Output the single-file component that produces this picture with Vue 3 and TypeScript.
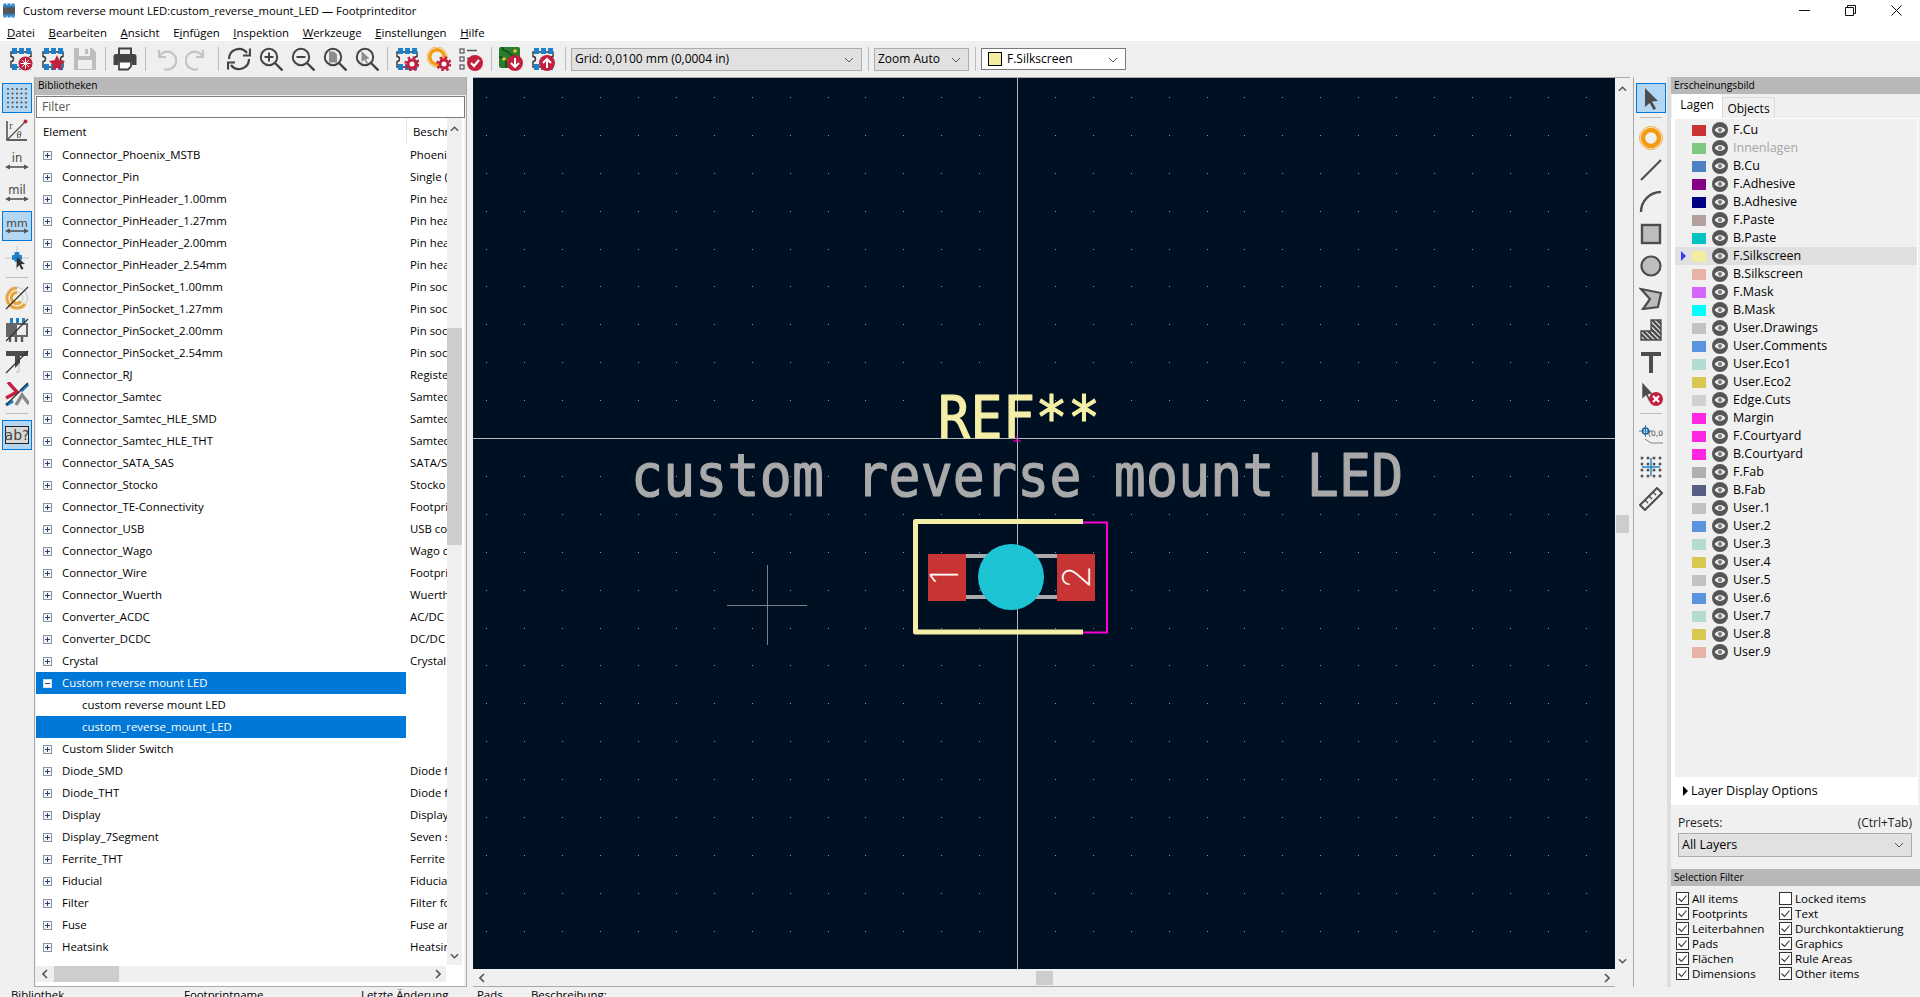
<script setup lang="ts">
type IconLabel = { t: string; x: number; y: number; s: number; f?: string; italic?: boolean };
type ToolItem = { icon?: string; sep?: boolean; wide?: boolean; active?: boolean; labels?: IconLabel[] };

const menus = [
  { pre: '', key: 'D', post: 'atei' },
  { pre: '', key: 'B', post: 'earbeiten' },
  { pre: '', key: 'A', post: 'nsicht' },
  { pre: 'E', key: 'i', post: 'nfügen' },
  { pre: '', key: 'I', post: 'nspektion' },
  { pre: '', key: 'W', post: 'erkzeuge' },
  { pre: '', key: 'E', post: 'instellungen' },
  { pre: '', key: 'H', post: 'ilfe' },
];

const topTools: ToolItem[] = [
  { icon: 'i-fp-new' }, { icon: 'i-fp-star' }, { icon: 'i-save' }, { sep: true },
  { icon: 'i-print' }, { sep: true },
  { icon: 'i-undo' }, { icon: 'i-redo' }, { sep: true, wide: true },
  { icon: 'i-refresh' }, { icon: 'i-zoom-in' }, { icon: 'i-zoom-out' }, { icon: 'i-zoom-fit' }, { icon: 'i-zoom-sel' }, { sep: true },
  { icon: 'i-fp-gear' }, { icon: 'i-pad-gear' }, { icon: 'i-drc' }, { sep: true },
  { icon: 'i-pcb-down' }, { icon: 'i-fp-up' },
];

const leftTools: ToolItem[] = [
  { icon: 'i-dots', active: true },
  { icon: 'i-polar', labels: [{ t: 'r', x: 6, y: 11, s: 10, f: 'Liberation Serif' }, { t: 'θ', x: 14, y: 20, s: 10, f: 'Liberation Serif', italic: true }] },
  { icon: 'i-dim', labels: [{ t: 'in', x: 12, y: 12, s: 11.5 }] },
  { icon: 'i-dim', labels: [{ t: 'mil', x: 12, y: 12, s: 11.5 }] },
  { icon: 'i-dim', active: true, labels: [{ t: 'mm', x: 12, y: 12.5, s: 11 }] },
  { icon: 'i-cross-cursor' }, { sep: true },
  { icon: 'i-donut-off' }, { icon: 'i-chip-off' }, { icon: 'i-t-off' }, { icon: 'i-track-off' }, { sep: true, wide: true },
  { icon: 'i-abq', active: true, labels: [{ t: 'ab?', x: 12, y: 17, s: 14 }] },
];

const rightTools: ToolItem[] = [
  { icon: 'i-arrow', active: true }, { sep: true },
  { icon: 'i-donut' }, { icon: 'i-line' }, { icon: 'i-arc' }, { icon: 'i-rect' }, { icon: 'i-circle' }, { icon: 'i-poly' }, { icon: 'i-hatch' }, { icon: 'i-t' }, { icon: 'i-del' }, { sep: true, wide: true },
  { icon: 'i-origin', labels: [{ t: '(0,0)', x: 18, y: 13, s: 7.5 }] }, { icon: 'i-gridorigin' }, { icon: 'i-ruler' },
];

const libs: { name: string; desc?: string; kind?: string }[] = [
  { name: 'Connector_Phoenix_MSTB', desc: 'Phoenix Contact' },
  { name: 'Connector_Pin', desc: 'Single (1x)' },
  { name: 'Connector_PinHeader_1.00mm', desc: 'Pin header' },
  { name: 'Connector_PinHeader_1.27mm', desc: 'Pin header' },
  { name: 'Connector_PinHeader_2.00mm', desc: 'Pin header' },
  { name: 'Connector_PinHeader_2.54mm', desc: 'Pin header' },
  { name: 'Connector_PinSocket_1.00mm', desc: 'Pin socket' },
  { name: 'Connector_PinSocket_1.27mm', desc: 'Pin socket' },
  { name: 'Connector_PinSocket_2.00mm', desc: 'Pin socket' },
  { name: 'Connector_PinSocket_2.54mm', desc: 'Pin socket' },
  { name: 'Connector_RJ', desc: 'Registered' },
  { name: 'Connector_Samtec', desc: 'Samtec' },
  { name: 'Connector_Samtec_HLE_SMD', desc: 'Samtec' },
  { name: 'Connector_Samtec_HLE_THT', desc: 'Samtec' },
  { name: 'Connector_SATA_SAS', desc: 'SATA/SAS' },
  { name: 'Connector_Stocko', desc: 'Stocko' },
  { name: 'Connector_TE-Connectivity', desc: 'Footprint' },
  { name: 'Connector_USB', desc: 'USB conn' },
  { name: 'Connector_Wago', desc: 'Wago con' },
  { name: 'Connector_Wire', desc: 'Footprint' },
  { name: 'Connector_Wuerth', desc: 'Wuerth' },
  { name: 'Converter_ACDC', desc: 'AC/DC' },
  { name: 'Converter_DCDC', desc: 'DC/DC' },
  { name: 'Crystal', desc: 'Crystal' },
  { name: 'Custom reverse mount LED', kind: 'open' },
  { name: 'custom reverse mount LED', kind: 'child' },
  { name: 'custom_reverse_mount_LED', kind: 'child-sel' },
  { name: 'Custom Slider Switch' },
  { name: 'Diode_SMD', desc: 'Diode foot' },
  { name: 'Diode_THT', desc: 'Diode foot' },
  { name: 'Display', desc: 'Display' },
  { name: 'Display_7Segment', desc: 'Seven seg' },
  { name: 'Ferrite_THT', desc: 'Ferrite' },
  { name: 'Fiducial', desc: 'Fiducial' },
  { name: 'Filter', desc: 'Filter foot' },
  { name: 'Fuse', desc: 'Fuse and' },
  { name: 'Heatsink', desc: 'Heatsink' },
  { name: 'Inductor_SMD', desc: 'Inductor' },
];

const layers = [
  ['F.Cu', '#c83434'], ['Innenlagen', '#7fc87f'], ['B.Cu', '#4d7fc4'], ['F.Adhesive', '#840084'],
  ['B.Adhesive', '#000084'], ['F.Paste', '#b1a09c'], ['B.Paste', '#00c2c2'], ['F.Silkscreen', '#f2eda1'],
  ['B.Silkscreen', '#e8b2a7'], ['F.Mask', '#d864ff'], ['B.Mask', '#00ffff'], ['User.Drawings', '#c2c2c2'],
  ['User.Comments', '#5994dc'], ['User.Eco1', '#b4dbd2'], ['User.Eco2', '#d8c852'], ['Edge.Cuts', '#d0d2cd'],
  ['Margin', '#ff26e2'], ['F.Courtyard', '#ff26e2'], ['B.Courtyard', '#ff26e2'], ['F.Fab', '#afafaf'],
  ['B.Fab', '#585d84'], ['User.1', '#c2c2c2'], ['User.2', '#5994dc'], ['User.3', '#b4dbd2'],
  ['User.4', '#d8c852'], ['User.5', '#c2c2c2'], ['User.6', '#5994dc'], ['User.7', '#b4dbd2'],
  ['User.8', '#d8c852'], ['User.9', '#e8b2a7'],
];

const filters = [
  ['All items', true], ['Locked items', false],
  ['Footprints', true], ['Text', true],
  ['Leiterbahnen', true], ['Durchkontaktierung', true],
  ['Pads', true], ['Graphics', true],
  ['Flächen', true], ['Rule Areas', true],
  ['Dimensions', true], ['Other items', true],
] as [string, boolean][];

// grid dots are placed relative to the canvas origin
const gridDots: { x: number; y: number }[] = [];
for (let i = -14; i <= 16; i++) {
  for (let j = -9; j <= 14; j++) {
    gridDots.push({ x: Math.round(1017 + i * 37.9), y: Math.round(438 + j * 37.9) });
  }
}

const hatchLines: string[] = [];
for (let k = -24; k <= 24; k += 5) hatchLines.push(`M${k} 0L${k + 24} 24`);
const hatchPath = hatchLines.join('');
</script>

<template>
  <div class="app">
    <svg class="defs" aria-hidden="true">
      <symbol id="fp" viewBox="0 0 24 24">
        <path d="M2 5h20v4.500a2.500 2.500 0 0 0 0 5V20H2v-5.500a2.500 2.500 0 0 0 0-5z" fill="none" stroke="#333" stroke-width="1.400" />
        <g fill="#1e81ca"><rect x="3" y="1" width="5" height="6" /><rect x="10" y="1" width="5" height="6" /><rect x="17" y="1" width="5" height="6" /><rect x="3" y="17" width="5" height="6" /><rect x="10" y="17" width="5" height="6" /><rect x="17" y="17" width="5" height="6" /></g>
      </symbol>
      <symbol id="gear" viewBox="0 0 24 24">
        <circle cx="17" cy="17" r="5.500" fill="#c2203f" />
        <circle cx="17" cy="17" r="6.500" fill="none" stroke="#c2203f" stroke-width="2.500" stroke-dasharray="2.500 2.600" />
        <circle cx="17" cy="17" r="2.500" fill="#fff" />
      </symbol>
      <symbol id="i-fp-new" viewBox="0 0 24 24">
        <use href="#fp" width="24" height="24" />
        <circle cx="16.500" cy="16.500" r="7.500" fill="#c2203f" stroke="#fff" stroke-width="0.800" />
        <path d="M16.500 11.500v10M11.500 16.500h10M13.200 13.200l6.600 6.600M19.800 13.200l-6.600 6.600" stroke="#fff" stroke-width="1" />
      </symbol>
      <symbol id="i-fp-star" viewBox="0 0 24 24">
        <use href="#fp" width="24" height="24" />
        <path d="M16 8l2.500 5.300 5.500.7-4 3.900 1 5.600-5-2.700-5 2.700 1-5.600-4-3.900 5.500-.7z" fill="#c2203f" />
      </symbol>
      <symbol id="i-save" viewBox="0 0 24 24">
        <path d="M1 1h18l4 4v18H1z" fill="#bdbdbd" />
        <rect x="6" y="1" width="11" height="8" fill="#efefef" /><rect x="12" y="2" width="3" height="5" fill="#bdbdbd" />
        <rect x="5" y="13" width="14" height="9" fill="#efefef" />
      </symbol>
      <symbol id="i-print" viewBox="0 0 24 24">
        <path d="M6 7V1.500h12V7" fill="none" stroke="#444" stroke-width="2" />
        <path d="M3 7h18a2.500 2.500 0 0 1 2.500 2.500V18H19v-4H5v4H.5V9.500A2.500 2.500 0 0 1 3 7z" fill="#444" />
        <path d="M6 14.500h12v5l-3 3H6z" fill="#fff" stroke="#444" stroke-width="1.800" />
      </symbol>
      <symbol id="i-undo" viewBox="0 0 24 24">
        <path d="M6 3v7h7M6 10a9 9 0 1 1 5 12" fill="none" stroke="#c4c4c4" stroke-width="2.200" />
      </symbol>
      <symbol id="i-redo" viewBox="0 0 24 24">
        <path d="M18 3v7h-7M18 10a9 9 0 1 0-5 12" fill="none" stroke="#c4c4c4" stroke-width="2.200" />
      </symbol>
      <symbol id="i-refresh" viewBox="0 0 24 24">
        <path d="M2 12a10 10 0 0 1 18-6M22 12a10 10 0 0 1-18 6" fill="none" stroke="#444" stroke-width="2.200" />
        <path d="M23 1.500v7h-7M1 22.500v-7h7" fill="none" stroke="#444" stroke-width="2.200" />
      </symbol>
      <symbol id="lens" viewBox="0 0 24 24">
        <circle cx="10" cy="10" r="8.200" fill="none" stroke="#444" stroke-width="2" />
        <path d="M16 16l7.500 7.500" stroke="#444" stroke-width="2.400" />
      </symbol>
      <symbol id="i-zoom-in" viewBox="0 0 24 24">
        <use href="#lens" width="24" height="24" /><path d="M10 5.500v9M5.500 10h9" stroke="#444" stroke-width="2" />
      </symbol>
      <symbol id="i-zoom-out" viewBox="0 0 24 24">
        <use href="#lens" width="24" height="24" /><path d="M5.500 10h9" stroke="#444" stroke-width="2" />
      </symbol>
      <symbol id="i-zoom-fit" viewBox="0 0 24 24">
        <use href="#lens" width="24" height="24" /><path d="M6 4.500h5l3 3v8H6z" fill="#8c8c8c" />
      </symbol>
      <symbol id="i-zoom-sel" viewBox="0 0 24 24">
        <use href="#lens" width="24" height="24" /><path d="M6.500 4l8 7.500-3.500.5 2 4-1.500.7-2-4-3 2.300z" fill="#8c8c8c" />
      </symbol>
      <symbol id="i-fp-gear" viewBox="0 0 24 24">
        <use href="#fp" width="24" height="24" /><use href="#gear" width="24" height="24" />
      </symbol>
      <symbol id="i-pad-gear" viewBox="0 0 24 24">
        <circle cx="10" cy="10" r="7.200" fill="none" stroke="#f39c12" stroke-width="3.400" />
        <circle cx="10" cy="10" r="10" fill="none" stroke="#f39c12" stroke-width="0.700" />
        <use href="#gear" width="24" height="24" />
      </symbol>
      <symbol id="i-drc" viewBox="0 0 24 24">
        <g fill="none" stroke="#555" stroke-width="1.200"><rect x="1" y="2" width="4" height="4" /><rect x="1" y="10" width="4" height="4" /><rect x="1" y="18" width="4" height="4" /></g>
        <path d="M8 3.500h10M8 11.500h5" stroke="#555" stroke-width="1.400" />
        <circle cx="16" cy="16" r="8" fill="#c2203f" />
        <path d="M12 16l3 3 5-6" fill="none" stroke="#fff" stroke-width="2.200" />
      </symbol>
      <symbol id="i-pcb-down" viewBox="0 0 24 24">
        <rect x="0" y="0" width="21" height="21" rx="2" fill="#2a7d2e" />
        <path d="M3 0c0 5 5 3 7 6s6 3 9 3M0 10c4 0 5 2 7 5l0 6" fill="none" stroke="#0f4d17" stroke-width="1.600" />
        <circle cx="5" cy="12" r="1.800" fill="#f2c230" /><circle cx="16" cy="4" r="1.800" fill="#f2c230" />
        <circle cx="16" cy="16" r="8" fill="#c2203f" />
        <path d="M16 11v9M12 16l4 4 4-4" fill="none" stroke="#fff" stroke-width="2" />
      </symbol>
      <symbol id="i-fp-up" viewBox="0 0 24 24">
        <use href="#fp" width="24" height="24" />
        <circle cx="16" cy="16" r="8" fill="#c2203f" />
        <path d="M16 21v-9M12 16l4-4 4 4" fill="none" stroke="#fff" stroke-width="2" />
      </symbol>
      <symbol id="i-dots" viewBox="0 0 24 24">
        <g fill="#555"><circle v-for="d in 25" :key="d" :cx="3 + ((d - 1) % 5) * 4.500" :cy="3 + Math.floor((d - 1) / 5) * 4.500" r="1.100" /></g>
      </symbol>
      <symbol id="i-polar" viewBox="0 0 24 24">
        <path d="M2 3v19h20" fill="none" stroke="#333" stroke-width="1.300" />
        <path d="M2 22L20 4" stroke="#555" stroke-width="1.300" />
        <circle cx="20.500" cy="3.500" r="2" fill="#c2203f" />
      </symbol>
      <symbol id="i-dim" viewBox="0 0 24 24">
        <path d="M2 17h20" stroke="#555" stroke-width="1.600" />
        <path d="M0 17l5-2.500v5zM24 17l-5-2.500v5z" fill="#555" />
      </symbol>
      <symbol id="i-cross-cursor" viewBox="0 0 24 24">
        <path d="M12 0v24M0 12h24" stroke="#bbb" stroke-width="0.800" />
        <rect x="7" y="9" width="10" height="5" rx="1" fill="#1e81ca" /><rect x="9.500" y="6" width="5" height="10" rx="1" fill="#1e81ca" />
        <path d="M12 11l8 7-4 .3 2.500 4.500-2 1-2.300-4.500-2.700 2.700z" fill="#333" />
      </symbol>
      <symbol id="i-donut" viewBox="0 0 24 24">
        <circle cx="12" cy="12" r="8" fill="none" stroke="#f39c12" stroke-width="4.500" />
        <circle cx="12" cy="12" r="11.500" fill="none" stroke="#f39c12" stroke-width="0.800" />
      </symbol>
      <symbol id="i-donut-off" viewBox="0 0 24 24">
        <path d="M12 2a10 10 0 1 0 8 16" fill="none" stroke="#f39c12" stroke-width="3" />
        <path d="M12 6.500a5.500 5.500 0 1 0 4 9" fill="none" stroke="#f39c12" stroke-width="3" />
        <g fill="none" stroke="#bbb" stroke-width="0.800"><circle cx="12" cy="12" r="10.500" /><circle cx="12" cy="12" r="6" /></g>
        <path d="M1 23L23 1" stroke="#333" stroke-width="1.200" />
      </symbol>
      <symbol id="i-chip-off" viewBox="0 0 24 24">
        <g fill="#1e81ca"><rect x="5" y="0" width="3" height="5" /><rect x="11" y="0" width="3" height="5" /><rect x="17" y="0" width="3" height="5" /></g>
        <rect x="1" y="5" width="22" height="14" fill="#666" />
        <rect x="12" y="7" width="9" height="10" fill="#efefef" />
        <path d="M5 19v5M11 19v5M17 19v5" stroke="#555" stroke-width="2.400" />
        <path d="M1 23L23 1" stroke="#333" stroke-width="1.200" />
      </symbol>
      <symbol id="i-t" viewBox="0 0 24 24">
        <path d="M2 2h20v4h-8v17h-4V6H2z" fill="#4d4d4d" />
      </symbol>
      <symbol id="i-t-off" viewBox="0 0 24 24">
        <path d="M1 1h22v5h-8v7l-5 5V6H1z" fill="#4d4d4d" />
        <path d="M11 22h3V14" fill="none" stroke="#bbb" stroke-width="1" />
        <path d="M1 23L23 1" stroke="#333" stroke-width="1.200" />
      </symbol>
      <symbol id="i-track-off" viewBox="0 0 24 24">
        <path d="M3 0l9 10L1 16" fill="none" stroke="#c2203f" stroke-width="3.400" />
        <path d="M23 2l-7 7M8 19l-7 4" fill="none" stroke="#1e81ca" stroke-width="3.400" />
        <path d="M24 22l-7-9-6 10" fill="none" stroke="#888" stroke-width="3.400" />
        <path d="M1 23L23 1" stroke="#333" stroke-width="1.200" />
      </symbol>
      <symbol id="i-abq" viewBox="0 0 24 24">
        <rect x="0.500" y="3.500" width="23" height="17" fill="#d8d8d8" stroke="#222" />
      </symbol>
      <symbol id="i-arrow" viewBox="0 0 24 24">
        <path d="M6 2l13 13-6 .5 4 7-2.500 1.500-3.800-7L6 21z" fill="#4d4d4d" />
      </symbol>
      <symbol id="i-line" viewBox="0 0 24 24"><path d="M2 22L22 2" stroke="#4d4d4d" stroke-width="2.200" /></symbol>
      <symbol id="i-arc" viewBox="0 0 24 24"><path d="M2 22A20 20 0 0 1 22 2" fill="none" stroke="#4d4d4d" stroke-width="2.400" /></symbol>
      <symbol id="i-rect" viewBox="0 0 24 24"><rect x="3" y="3" width="18" height="18" fill="#bdbdbd" stroke="#4d4d4d" stroke-width="2.400" /></symbol>
      <symbol id="i-circle" viewBox="0 0 24 24"><circle cx="12" cy="12" r="9.500" fill="#bdbdbd" stroke="#4d4d4d" stroke-width="2.200" /></symbol>
      <symbol id="i-poly" viewBox="0 0 24 24"><path d="M2 3l20 4-3 14-15 2 7-10z" fill="#bdbdbd" stroke="#4d4d4d" stroke-width="2.200" /></symbol>
      <symbol id="i-hatch" viewBox="0 0 24 24">
        <clipPath id="hatch-clip"><path d="M12 2h10v20H2v-9h10z" /></clipPath>
        <g clip-path="url(#hatch-clip)"><rect width="24" height="24" fill="#eee" /><path :d="hatchPath" stroke="#4d4d4d" stroke-width="2.400" /></g>
        <path d="M12 2h10v20H2v-9h10z" fill="none" stroke="#4d4d4d" stroke-width="1.400" />
      </symbol>
      <symbol id="i-del" viewBox="0 0 24 24">
        <path d="M3 0l11 12-5 .5 3 6-2 1-3-6-4 3.500z" fill="#4d4d4d" stroke="#fff" stroke-width="0.500" />
        <circle cx="17" cy="17" r="7" fill="#c2203f" />
        <path d="M14 14l6 6M20 14l-6 6" stroke="#fff" stroke-width="2.200" />
      </symbol>
      <symbol id="i-origin" viewBox="0 0 24 24">
        <path d="M0 8h13M6.500 2v12" stroke="#1e81ca" stroke-width="1" />
        <circle cx="6.500" cy="8" r="3" fill="none" stroke="#1e5f9a" stroke-width="1.600" />
        <path d="M6 16l6 4h12" fill="none" stroke="#666" stroke-width="0.800" />
      </symbol>
      <symbol id="i-gridorigin" viewBox="0 0 24 24">
        <path d="M12 3v18M3 12h18" stroke="#1e81ca" stroke-width="1.400" />
        <g fill="#555"><circle v-for="d in 16" :key="d" :cx="3 + ((d - 1) % 4) * 6" :cy="3 + Math.floor((d - 1) / 4) * 6" r="1.500" /></g>
      </symbol>
      <symbol id="i-ruler" viewBox="0 0 24 24">
        <path d="M1 18L18 1l5 5L6 23z" fill="#efefef" stroke="#4d4d4d" stroke-width="2" />
        <path d="M6 13l3 3M10 9l3 3M14 5l3 3" stroke="#4d4d4d" stroke-width="1.400" />
      </symbol>
      <symbol id="eye" viewBox="0 0 16 16">
        <circle cx="8" cy="8" r="8" fill="#555" />
        <path d="M2.500 8c3-4 8-4 11 0-3 4-8 4-11 0z" fill="#ededed" />
        <circle cx="8" cy="8" r="2" fill="#777" />
      </symbol>
      <symbol id="exp-plus" viewBox="0 0 9 9">
        <rect x="0.500" y="0.500" width="8" height="8" fill="#f4f4f4" stroke="#8a93a6" />
        <path d="M2 4.500h5M4.500 2v5" stroke="#2b3d73" />
      </symbol>
      <symbol id="exp-minus" viewBox="0 0 9 9">
        <rect x="0.500" y="0.500" width="8" height="8" fill="#fff" stroke="#cfe0f0" />
        <path d="M2 4.500h5" stroke="#2b3d73" />
      </symbol>
      <symbol id="chev" viewBox="0 0 10 6"><path d="M1 1l4 4 4-4" fill="none" stroke="#555" stroke-width="1" /></symbol>
      <symbol id="cb-on" viewBox="0 0 13 13">
        <rect x="0.500" y="0.500" width="12" height="12" fill="#fff" stroke="#333" />
        <path d="M2.500 6.500l3 3 5-6" fill="none" stroke="#333" stroke-width="1.100" />
      </symbol>
      <symbol id="cb-off" viewBox="0 0 13 13">
        <rect x="0.500" y="0.500" width="12" height="12" fill="#fff" stroke="#333" />
      </symbol>
    </svg>

    <header class="titlebar">
      <svg class="app-icon" viewBox="0 0 14 14">
        <rect x="1" y="2" width="12" height="10" rx="1" fill="#555" />
        <g fill="#2a86cf"><rect x="1.500" y="0" width="3" height="4" /><rect x="5.500" y="0" width="3" height="4" /><rect x="9.500" y="0" width="3" height="4" /><rect x="1.500" y="10" width="3" height="4" /><rect x="5.500" y="10" width="3" height="4" /><rect x="9.500" y="10" width="3" height="4" /></g>
      </svg>
      <span class="title">Custom reverse mount LED:custom_reverse_mount_LED — Footprinteditor</span>
      <div class="winbtns">
        <button class="winbtn"><svg viewBox="0 0 11 11"><path d="M0 5.500h11" stroke="#111" /></svg></button>
        <button class="winbtn"><svg viewBox="0 0 11 11"><path d="M.5 2.500h8v8h-8zM2.500 2.500v-2h8v8h-2" fill="none" stroke="#111" /></svg></button>
        <button class="winbtn"><svg viewBox="0 0 11 11"><path d="M.5.500l10 10M10.500.500l-10 10" stroke="#111" /></svg></button>
      </div>
    </header>

    <nav class="menubar">
      <span v-for="m in menus" :key="m.key + m.post" class="menu">{{ m.pre }}<u>{{ m.key }}</u>{{ m.post }}</span>
    </nav>

    <div class="toolbar">
      <template v-for="(t, i) in topTools" :key="i">
        <span v-if="t.sep" class="tsep" :class="{ 'tsep-wide': t.wide }"></span>
        <span v-else class="tbtn"><svg class="ic"><use :href="'#' + t.icon" width="24" height="24" /></svg></span>
      </template>
      <span class="tsep tsep-combo"></span>
      <div class="combo combo-grid">Grid: 0,0100 mm (0,0004 in)<svg class="chev"><use href="#chev" width="10" height="6" /></svg></div>
      <span class="tsep tsep-combo"></span>
      <div class="combo combo-zoom">Zoom Auto<svg class="chev"><use href="#chev" width="10" height="6" /></svg></div>
      <span class="tsep tsep-combo"></span>
      <div class="combo combo-layer"><i class="layer-swatch"></i>F.Silkscreen<svg class="chev"><use href="#chev" width="10" height="6" /></svg></div>
    </div>

    <main class="main">
      <aside class="vtools vtools-left">
        <template v-for="(t, i) in leftTools" :key="i">
          <span v-if="t.sep" class="vsep" :class="{ 'vsep-tall': t.wide }"></span>
          <span v-else class="vbtn" :class="{ on: t.active }">
            <svg class="ic">
              <use :href="'#' + t.icon" width="24" height="24" />
              <text v-for="l in t.labels" :key="l.t" class="ic-label" :x="l.x" :y="l.y" :font-size="l.s" :font-family="l.f || 'DejaVu Sans'" :font-style="l.italic ? 'italic' : 'normal'" text-anchor="middle">{{ l.t }}</text>
            </svg>
          </span>
        </template>
      </aside>

      <section class="libpanel">
        <div class="caption">Bibliotheken</div>
        <div class="filter">Filter</div>
        <div class="tree">
          <div class="tree-body">
            <div class="tree-list">
              <div class="tree-head"><span class="col-a">Element</span><span class="col-b">Beschreibung</span></div>
              <div v-for="l in libs" :key="l.name + l.kind" class="tree-row">
                <div class="cell-name" :class="{ sel: l.kind === 'open' || l.kind === 'child-sel', child: l.kind === 'child' || l.kind === 'child-sel' }">
                  <svg v-if="l.kind !== 'child' && l.kind !== 'child-sel'" class="exp"><use :href="l.kind === 'open' ? '#exp-minus' : '#exp-plus'" width="9" height="9" /></svg>
                  {{ l.name }}
                </div>
                <div class="cell-desc">{{ l.desc }}</div>
              </div>
            </div>
            <div class="vscroll">
              <svg class="arrow" viewBox="0 0 10 6"><path d="M1 5l4-4 4 4" fill="none" stroke="#555" stroke-width="1.600" /></svg>
              <div class="vthumb"></div>
              <svg class="arrow arrow-end" viewBox="0 0 10 6"><path d="M1 1l4 4 4-4" fill="none" stroke="#555" stroke-width="1.600" /></svg>
            </div>
          </div>
          <div class="hscroll">
            <svg class="harrow" viewBox="0 0 6 10"><path d="M5 1L1 5l4 4" fill="none" stroke="#555" stroke-width="1.600" /></svg>
            <div class="hthumb"></div>
            <svg class="harrow harrow-end" viewBox="0 0 6 10"><path d="M1 1l4 4-4 4" fill="none" stroke="#555" stroke-width="1.600" /></svg>
          </div>
        </div>
      </section>

      <section class="canvas-wrap">
        <div class="canvas-row">
          <svg class="canvas" viewBox="473 78 1142 891">
            <rect x="473" y="78" width="1142" height="891" fill="#001023" />
            <rect v-for="(d, i) in gridDots" :key="i" :x="d.x" :y="d.y" width="1" height="1" fill="#8f959c" />
            <path d="M727 605.500h80M767.500 565v80" stroke="#7c7f84" />
            <path d="M473 438.500h1142M1017.500 78v891" stroke="#b8b8b8" />
            <text class="cv-text" transform="translate(938 438) scale(.9 1)" textLength="180" fill="#f5eea6" stroke="#f5eea6">REF**</text>
            <text class="cv-text" transform="translate(631 496) scale(.9 1)" textLength="858" fill="#a9a9a9" stroke="#a9a9a9">custom reverse mount LED</text>
            <path d="M1083 521.500H915.500V632H1083" fill="none" stroke="#f5eea6" stroke-width="5" stroke-linejoin="round" />
            <path d="M1083 522.500h24v110h-24" fill="none" stroke="#ff00d8" stroke-width="2" />
            <path d="M966 556h91M966 597h91" stroke="#aaa" stroke-width="4" />
            <rect x="928" y="554" width="38" height="47" fill="#c83434" />
            <rect x="1057" y="554" width="38" height="47" fill="#c83434" />
            <circle cx="1011" cy="577" r="33" fill="#1dc4d4" />
            <path d="M1017 436v6M1013 441h8" stroke="#ff00d8" stroke-width="1" />
            <text class="pad-num" transform="translate(958 577) rotate(-90)" text-anchor="middle">1</text>
            <text class="pad-num" transform="translate(1090 577) rotate(-90)" text-anchor="middle">2</text>
          </svg>
          <div class="cv-vscroll">
            <svg class="arrow" viewBox="0 0 10 6"><path d="M1 5l4-4 4 4" fill="none" stroke="#555" stroke-width="1.600" /></svg>
            <div class="cv-vthumb"></div>
            <svg class="arrow arrow-end" viewBox="0 0 10 6"><path d="M1 1l4 4 4-4" fill="none" stroke="#555" stroke-width="1.600" /></svg>
          </div>
        </div>
        <div class="cv-hscroll">
          <svg class="harrow" viewBox="0 0 6 10"><path d="M5 1L1 5l4 4" fill="none" stroke="#555" stroke-width="1.600" /></svg>
          <div class="cv-hthumb"></div>
          <svg class="harrow harrow-end" viewBox="0 0 6 10"><path d="M1 1l4 4-4 4" fill="none" stroke="#555" stroke-width="1.600" /></svg>
        </div>
      </section>

      <aside class="vtools vtools-right">
        <template v-for="(t, i) in rightTools" :key="i">
          <span v-if="t.sep" class="vsep" :class="{ 'vsep-tall': t.wide }"></span>
          <span v-else class="vbtn" :class="{ on: t.active }">
            <svg class="ic">
              <use :href="'#' + t.icon" width="24" height="24" />
              <text v-for="l in t.labels" :key="l.t" class="ic-label" :x="l.x" :y="l.y" :font-size="l.s" font-family="DejaVu Sans" text-anchor="middle">{{ l.t }}</text>
            </svg>
          </span>
        </template>
      </aside>

      <section class="appearance">
        <div class="caption caption-right">Erscheinungsbild</div>
        <div class="tabs">
          <span class="tab tab-on">Lagen</span>
          <span class="tab">Objects</span>
        </div>
        <div class="tabpage">
          <div class="layer-list">
            <div v-for="l in layers" :key="l[0]" class="layer" :class="{ current: l[0] === 'F.Silkscreen', dim: l[0] === 'Innenlagen' }">
              <i v-if="l[0] === 'F.Silkscreen'" class="marker"></i>
              <i class="swatch" :style="{ background: l[1] }"></i>
              <svg class="eye"><use href="#eye" width="16" height="16" /></svg>
              <span>{{ l[0] }}</span>
            </div>
          </div>
          <div class="options"><i class="tri"></i>Layer Display Options</div>
        </div>
        <div class="presets">
          <div class="presets-head"><span>Presets:</span><span>(Ctrl+Tab)</span></div>
          <div class="combo combo-presets">All Layers<svg class="chev"><use href="#chev" width="10" height="6" /></svg></div>
        </div>
        <div class="caption caption-filter">Selection Filter</div>
        <div class="filters">
          <label v-for="f in filters" :key="f[0]" class="check">
            <svg class="cb"><use :href="f[1] ? '#cb-on' : '#cb-off'" width="13" height="13" /></svg>{{ f[0] }}
          </label>
        </div>
      </section>
    </main>

    <footer class="statusbar">
      <span class="st st-1">Bibliothek</span>
      <span class="st st-2">Footprintname</span>
      <span class="st st-3">Letzte Änderung</span>
      <span class="st st-4">Pads</span>
      <span class="st">Beschreibung:</span>
    </footer>
  </div>
</template>

<style scoped>
.app {
  width: 1920px;
  height: 997px;
  overflow: hidden;
  display: flex;
  flex-direction: column;
  background: #f0f0f0;
  color: #000;
  font: 11.4px/16px "Open Sans", "Noto Sans", sans-serif;
}

.defs {
  position: absolute;
  width: 0;
  height: 0;
}

.titlebar {
  height: 23px;
  background: #fff;
  display: flex;
  align-items: center;
  padding-left: 2px;
  padding-bottom: 2px;
  box-sizing: border-box;
  flex: none;
}

.app-icon {
  width: 14px;
  height: 15px;
  margin-right: 7px;
}

.title {
  font-size: 11.3px;
}

.winbtns {
  margin-left: auto;
  margin-right: 1px;
  display: flex;
  align-self: flex-start;
}

.winbtn {
  width: 46px;
  height: 21px;
  border: 0;
  background: #fff;
  padding: 0;
  display: flex;
  align-items: center;
  justify-content: center;
}

.winbtn svg {
  width: 11px;
  height: 11px;
}

.menubar {
  height: 18px;
  background: #fff;
  display: flex;
  align-items: center;
  padding-left: 7px;
  padding-top: 1px;
  box-sizing: border-box;
  gap: 13.6px;
  flex: none;
}

.toolbar {
  height: 36px;
  flex: none;
  display: flex;
  align-items: center;
  padding-left: 5px;
  background: #efefef;
}

.tbtn {
  width: 32px;
  height: 32px;
  display: flex;
  align-items: center;
  justify-content: center;
}

.ic {
  width: 24px;
  height: 24px;
}

.ic-label {
  fill: #444;
}

.tsep {
  width: 8px;
  height: 24px;
  position: relative;
}

.tsep::after {
  content: "";
  position: absolute;
  left: 50%;
  top: 0;
  bottom: 0;
  border-left: 1px solid #bcbcbc;
}

.tsep-wide {
  width: 10px;
}

.tsep-combo {
  width: 12px;
}

.combo {
  height: 23px;
  background: #e1e1e1;
  border: 1px solid #adadad;
  display: flex;
  align-items: center;
  padding-left: 3px;
  box-sizing: border-box;
  position: relative;
  font-size: 12px;
}

.chev {
  position: absolute;
  right: 7px;
  top: 8px;
  width: 10px;
  height: 6px;
}

.combo-grid {
  width: 291px;
}

.combo-zoom {
  width: 95px;
}

.combo-layer {
  width: 145px;
  height: 22px;
  background: #fff;
  border: 1px solid #7a7a7a;
  padding-left: 6px;
}

.layer-swatch {
  width: 12px;
  height: 12px;
  background: #f2eda1;
  border: 1px solid #000;
  margin-right: 5px;
}

.main {
  flex: 1;
  min-height: 0;
  display: flex;
}

.vtools {
  width: 34px;
  flex: none;
  display: flex;
  flex-direction: column;
  align-items: center;
  padding-top: 5px;
  box-sizing: border-box;
}

.vtools-left {
  width: 35px;
  border-right: 1px solid #a9a9a9;
}

.vtools-right {
  border-left: 1px solid #a9a9a9;
  margin-left: 3px;
}

.vbtn {
  width: 30px;
  height: 32px;
  display: flex;
  align-items: center;
  justify-content: center;
  flex: none;
  box-sizing: border-box;
}

.vbtn.on {
  height: 30px;
  margin: 1px 0;
  background: #b3d7f3;
  border: 1px solid #0078d7;
}

.vsep {
  width: 22px;
  height: 8px;
  flex: none;
  position: relative;
}

.vsep::after {
  content: "";
  position: absolute;
  left: 0;
  right: 0;
  top: 3px;
  border-top: 1px solid #bcbcbc;
}

.vsep-tall {
  margin-bottom: 1px;
}

.libpanel {
  width: 432px;
  flex: none;
  display: flex;
  flex-direction: column;
  border-right: 1px solid #a9a9a9;
  border-bottom: 1px solid #a9a9a9;
  box-sizing: border-box;
}

.caption {
  height: 18px;
  flex: none;
  background: #b8b8b8;
  font-size: 10.2px;
  line-height: 17px;
  padding-left: 3px;
}

.filter {
  height: 22px;
  flex: none;
  margin: 1px 1px 0;
  box-sizing: border-box;
  border: 1px solid #7a7a7a;
  background: #fff;
  line-height: 20px;
  padding-left: 5px;
  color: #555;
  font-size: 12px;
}

.tree {
  flex: 1;
  min-height: 0;
  margin: 0 2px 0 1px;
  background: #fff;
  display: flex;
  flex-direction: column;
  padding-bottom: 4px;
}

.tree-body {
  flex: 1;
  min-height: 0;
  display: flex;
  padding-right: 2px;
}

.tree-list {
  flex: 1;
  min-width: 0;
  overflow: hidden;
}

.tree-head {
  height: 26px;
  display: flex;
  line-height: 28px;
}

.col-a {
  width: 370px;
  padding-left: 7px;
  box-sizing: border-box;
}

.col-b {
  flex: 1;
  min-width: 0;
  overflow: hidden;
  white-space: nowrap;
  border-left: 1px solid #e5e5e5;
  padding-left: 6px;
}

.tree-row {
  height: 22px;
  display: flex;
  line-height: 22px;
  white-space: nowrap;
}

.cell-name {
  width: 370px;
  flex: none;
  box-sizing: border-box;
  padding-left: 7px;
  display: flex;
  align-items: center;
}

.cell-name.child {
  padding-left: 46px;
}

.cell-name.sel {
  background: #0078d7;
  color: #fff;
}

.exp {
  width: 9px;
  height: 9px;
  margin-right: 10px;
  flex: none;
}

.cell-desc {
  flex: 1;
  min-width: 0;
  overflow: hidden;
  padding-left: 4px;
}

.vscroll {
  width: 15px;
  flex: none;
  background: #efefef;
  position: relative;
}

.arrow {
  position: absolute;
  top: 8px;
  left: 3px;
  width: 9px;
  height: 6px;
}

.arrow-end {
  top: auto;
  bottom: 6px;
}

.vthumb {
  position: absolute;
  left: 0;
  right: 0;
  top: 210px;
  height: 217px;
  background: #cdcdcd;
}

.hscroll {
  height: 16px;
  flex: none;
  margin-top: 1px;
  margin-right: 18px;
  background: #efefef;
  position: relative;
}

.harrow {
  position: absolute;
  left: 6px;
  top: 3px;
  width: 6px;
  height: 10px;
}

.harrow-end {
  left: auto;
  right: 5px;
}

.hthumb {
  position: absolute;
  left: 18px;
  width: 65px;
  top: 0;
  bottom: 0;
  background: #cdcdcd;
}

.canvas-wrap {
  width: 1157px;
  flex: none;
  margin-left: 6px;
  display: flex;
  flex-direction: column;
  border-top: 1px solid #a9a9a9;
}

.canvas-row {
  flex: 1;
  min-height: 0;
  display: flex;
}

.canvas {
  width: 1142px;
  height: 891px;
  display: block;
  flex: none;
}

.cv-text {
  font-family: "DejaVu Sans Mono", monospace;
  font-size: 59px;
  stroke-width: 1.2px;
  stroke-linejoin: round;
}

.pad-num {
  font-family: Inter, "DejaVu Sans", sans-serif;
  font-size: 38px;
  font-weight: 200;
  fill: #fff;
}

.cv-vscroll {
  width: 15px;
  flex: none;
  background: #f0f0f0;
  position: relative;
}

.cv-vthumb {
  position: absolute;
  left: 1px;
  right: 1px;
  top: 437px;
  height: 18px;
  background: #cdcdcd;
}

.cv-hscroll {
  height: 17px;
  flex: none;
  background: #f0f0f0;
  position: relative;
  margin-right: 15px;
  border-bottom: 1px solid #a9a9a9;
  box-sizing: border-box;
}

.cv-hthumb {
  position: absolute;
  left: 563px;
  width: 17px;
  top: 1px;
  bottom: 1px;
  background: #cdcdcd;
}

.appearance {
  flex: 1;
  min-width: 0;
  border-left: 4px solid #dedede;
  display: flex;
  flex-direction: column;
  position: relative;
  font-size: 11.6px;
}

.tabs {
  height: 24px;
  flex: none;
  display: flex;
  align-items: flex-end;
  padding-left: 1px;
}

.tab {
  width: 53px;
  height: 21px;
  line-height: 21px;
  text-align: center;
  box-sizing: border-box;
  border: 1px solid #d9d9d9;
  border-bottom: 0;
  font-size: 12px;
}

.tab-on {
  width: 50px;
  height: 24px;
  line-height: 22px;
  background: #fff;
  border: 0;
}

.tabpage {
  height: 687px;
  flex: none;
  margin-right: 2px;
  background: #fff;
  box-sizing: border-box;
  padding: 1px 1px 0 4px;
  display: flex;
  flex-direction: column;
}

.layer-list {
  flex: 1;
  min-height: 0;
  background: #f0f0f0;
  padding-top: 2px;
}

.layer {
  height: 18px;
  display: flex;
  align-items: center;
  padding-left: 17px;
  position: relative;
  font-size: 12.5px;
}

.layer.current {
  background: #e0e0e0;
}

.layer.dim {
  color: #a6a6a6;
}

.marker {
  position: absolute;
  left: 6px;
  top: 4px;
  border-left: 5px solid #3b3bff;
  border-top: 5px solid transparent;
  border-bottom: 5px solid transparent;
}

.swatch {
  width: 14px;
  height: 11px;
  margin-right: 6px;
}

.eye {
  width: 16px;
  height: 16px;
  margin-right: 5px;
}

.options {
  height: 28px;
  flex: none;
  display: flex;
  align-items: center;
  padding-left: 8px;
  font-size: 12.5px;
}

.tri {
  border-left: 5px solid #000;
  border-top: 5px solid transparent;
  border-bottom: 5px solid transparent;
  margin-right: 3px;
}

.presets {
  height: 64px;
  flex: none;
  padding: 10px 8px 0 7px;
  box-sizing: border-box;
  font-size: 12px;
}

.presets-head {
  display: flex;
  justify-content: space-between;
  margin-bottom: 2px;
  color: #222;
}

.combo-presets {
  height: 24px;
  padding-left: 3px;
  font-size: 12.5px;
}

.caption-right {
  height: 17px;
  line-height: 16px;
}

.caption-filter {
  height: 17px;
  line-height: 17px;
}

.filters {
  flex: 1;
  display: grid;
  grid-template-columns: 103px 1fr;
  grid-auto-rows: 15px;
  padding: 5px 0 0 5px;
}

.check {
  display: flex;
  align-items: center;
  white-space: nowrap;
}

.cb {
  width: 13px;
  height: 13px;
  margin-right: 3px;
  flex: none;
}

.statusbar {
  height: 10px;
  flex: none;
  display: flex;
  padding-left: 11px;
  line-height: 16px;
  overflow: hidden;
  background: #f0f0f0;
}

.st-1 {
  width: 173px;
}

.st-2 {
  width: 177px;
}

.st-3 {
  width: 116px;
}

.st-4 {
  width: 54px;
}
</style>

<style>
html,
body {
  margin: 0;
  padding: 0;
  overflow: hidden;
}
</style>
